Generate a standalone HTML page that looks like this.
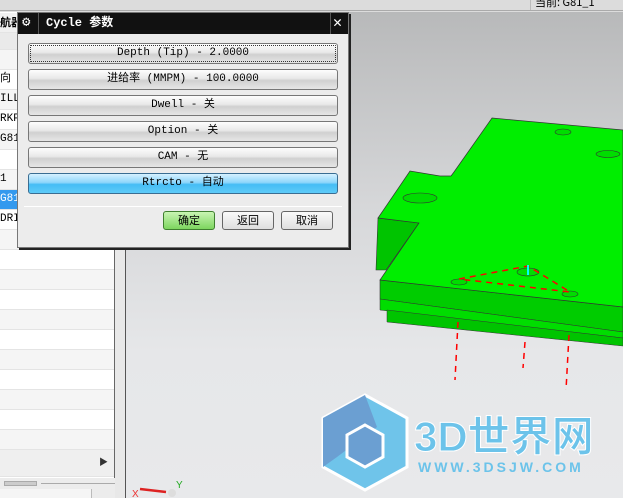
<!DOCTYPE html>
<html><head><meta charset="utf-8"><style>
*{margin:0;padding:0;box-sizing:border-box}
body{width:623px;height:498px;overflow:hidden;position:relative;background:#dcdcdc;font-family:"Liberation Mono","Noto Sans CJK SC",monospace;font-size:11px}
.abs{position:absolute}
#vp{left:126px;top:12px;width:497px;height:486px;background:linear-gradient(#b8b9ba,#d6d7d9 40%,#e6e7e9 70%,#e8e9eb)}
#left{left:0;top:12px;width:115px;height:466px;background:#fff;border-right:1px solid #666;overflow:hidden}
.row{position:absolute;left:0;width:114px;height:20px;border-bottom:1px solid #e4e4e4;font-size:11px;line-height:19px;color:#000;white-space:nowrap}
#dlg{left:17px;top:12px;width:332px;height:236px;background:#ececec;border:1px solid #777;box-shadow:2px 2px 0 #222}
#title{left:0;top:0;width:330px;height:21px;background:#111;color:#fff;font-weight:bold;font-size:12px;line-height:21px}
.btn{position:absolute;left:10px;width:310px;height:21px;border:1px solid #777;border-radius:3px;background:linear-gradient(#fdfdfd,#e8e8e8 45%,#d0d0d0 55%,#e6e6e6);text-align:center;line-height:19px;font-size:11px;color:#000}
.sb{position:absolute;top:198px;width:52px;height:19px;border:1px solid #666;border-radius:3px;background:linear-gradient(#fafafa,#dedede);text-align:center;line-height:17px;font-family:"Noto Sans CJK SC",sans-serif;font-size:11px}
</style></head><body>
<div class="abs" style="left:0;top:0;width:623px;height:11px;background:#dcdcdc;border-bottom:1px solid #aaa"></div>
<div class="abs" style="left:530px;top:-6px;font-size:11px;font-family:'Noto Sans CJK SC',sans-serif;border-left:1px solid #bbb;padding-left:4px">当前: G81_1</div>
<div id="vp" class="abs"></div>
<svg width="623" height="498" style="position:absolute;left:0;top:0">
<polygon points="380,280 623,307 623,332 380,299" fill="#00cc00" stroke="#333" stroke-width="0.6"/>
<polygon points="380,299 623,332 623,338 380,310" fill="#00dd00" stroke="#333" stroke-width="0.5"/>
<polygon points="387,310 623,338 623,346 387,322" fill="#00c400" stroke="#333" stroke-width="0.5"/>
<polygon points="378,218 419,223 386,270 376,270" fill="#00c400" stroke="#333" stroke-width="0.6"/>
<polygon points="492,118 623,130 623,307 380,280 419,223 378,218 410,171 440,176 451,176 454,172" fill="#00ee00" stroke="#333" stroke-width="0.7"/>
<ellipse cx="420" cy="198" rx="17" ry="5" fill="#00dd00" stroke="#333" stroke-width="0.6"/>
<ellipse cx="563" cy="132" rx="8" ry="3" fill="#00dd00" stroke="#333" stroke-width="0.6"/>
<ellipse cx="608" cy="154" rx="12" ry="3.5" fill="#00dd00" stroke="#333" stroke-width="0.6"/>
<ellipse cx="528" cy="272" rx="11" ry="4" fill="#00dd00" stroke="#333" stroke-width="0.6"/>
<ellipse cx="459" cy="282" rx="8" ry="3" fill="#00dd00" stroke="#333" stroke-width="0.6"/>
<ellipse cx="570" cy="294" rx="8" ry="3" fill="#00dd00" stroke="#333" stroke-width="0.6"/>
<g stroke="#f00" stroke-width="1.5" fill="none" stroke-dasharray="6,5">
<polyline points="459,279 528,266 570,292 459,279"/>
<line x1="458" y1="322" x2="455" y2="380"/>
<line x1="525" y1="342" x2="523" y2="368"/>
<line x1="569" y1="335" x2="566" y2="390"/>
</g>
<line x1="528" y1="265" x2="528" y2="275" stroke="#0ff" stroke-width="2"/>
<g transform="translate(323,395)">
<polygon points="0,23 42,0 84,23 84,72 42,95 0,72" fill="#6fc4ea" stroke="#fff" stroke-width="3"/>
<polygon points="0,23 42,0 54,32 14,62 0,72" fill="#6b9fd2"/>
<polygon points="42,30 60,40 60,62 42,72 24,62 24,40" fill="#6b9fd2" stroke="#fff" stroke-width="3"/>
</g>
<text x="414" y="451" font-family="Liberation Sans,Noto Sans CJK SC,sans-serif" font-size="42" font-weight="bold" fill="#6cc3ea" stroke="#fff" stroke-width="1">3D世界网</text>
<text x="418" y="472" font-family="Liberation Sans,sans-serif" font-size="14" font-weight="bold" fill="#6cc3ea" letter-spacing="3">WWW.3DSJW.COM</text>
<text x="132" y="497" font-family="Liberation Sans" font-size="10" fill="#e33">X</text>
<line x1="140" y1="489" x2="166" y2="492" stroke="#d22" stroke-width="2.5"/>
<text x="176" y="488" font-family="Liberation Sans" font-size="10" fill="#2a2">Y</text>
<circle cx="172" cy="493" r="4" fill="#ddd"/>
</svg>
<div class="abs" style="left:115px;top:12px;width:11px;height:486px;background:#e8e8e8;border-right:1px solid #555"></div>
<div id="left" class="abs">
<div class="row" style="top:1px;background:#f0f0f0;font-family:'Noto Sans CJK SC',sans-serif;font-weight:bold">航器</div>
<div class="row" style="top:21px;background:#eaeaea;height:17px"></div>
<div class="row" style="top:38px;background:#f5f5f5"></div>
<div class="row" style="top:58px">向</div>
<div class="row" style="top:78px;background:#f5f5f5">ILL</div>
<div class="row" style="top:98px">RKPI</div>
<div class="row" style="top:118px;background:#f5f5f5">G81</div>
<div class="row" style="top:138px"></div>
<div class="row" style="top:158px;background:#f5f5f5">1</div>
<div class="row" style="top:178px;background:#3399ee;color:#fff">G81</div>
<div class="row" style="top:198px">DRI</div>
<div class="row" style="top:218px;background:#f5f5f5"></div>
<div class="row" style="top:238px"></div>
<div class="row" style="top:258px;background:#f5f5f5"></div>
<div class="row" style="top:278px"></div>
<div class="row" style="top:298px;background:#f5f5f5"></div>
<div class="row" style="top:318px"></div>
<div class="row" style="top:338px;background:#f5f5f5"></div>
<div class="row" style="top:358px"></div>
<div class="row" style="top:378px;background:#f5f5f5"></div>
<div class="row" style="top:398px"></div>
<div class="row" style="top:418px;background:#f5f5f5"></div>
<div class="row" style="top:438px;background:#efefef;height:27px"><span style="position:absolute;right:6px;top:4px;font-size:9px;color:#333">▶</span></div>
</div>
<div class="abs" style="left:0;top:478px;width:115px;height:20px;background:#ececec"></div>
<div class="abs" style="left:4px;top:481px;width:33px;height:5px;background:#ccc;border:1px solid #aaa"></div>
<div class="abs" style="left:41px;top:483px;width:74px;height:1px;background:#aaa"></div>
<div class="abs" style="left:0;top:489px;width:92px;height:9px;background:#f5f5f5;border-right:1px solid #bbb"></div>
<div id="dlg" class="abs">
<div id="title" class="abs"><span style="position:absolute;left:4px;top:0;font-size:14px">⚙</span><span style="position:absolute;left:20px;top:0;width:1px;height:21px;background:#555"></span><span style="position:absolute;left:28px;font-family:'Liberation Mono','Noto Sans CJK SC',monospace">Cycle 参数</span><span style="position:absolute;left:312px;top:0;width:1px;height:21px;background:#555"></span><span style="position:absolute;left:315px;top:0;font-size:15px">✕</span></div>
<div class="btn" style="top:30px;outline:1px dotted #333;outline-offset:-3px">Depth (Tip) - 2.0000</div>
<div class="btn" style="top:56px">进给率 (MMPM) - 100.0000</div>
<div class="btn" style="top:82px">Dwell - 关</div>
<div class="btn" style="top:108px">Option - 关</div>
<div class="btn" style="top:134px">CAM - 无</div>
<div class="btn" style="top:160px;background:linear-gradient(#d6f1ff,#8ed6fb 45%,#45bdf5 55%,#5ecbf8);border-color:#3a6d92">Rtrcto - 自动</div>
<div class="abs" style="left:6px;top:193px;width:318px;height:1px;background:#ccc;border-bottom:1px solid #fff"></div>
<div class="sb" style="left:145px;background:linear-gradient(#c9f5b3,#7dd55f);border-color:#3f7f2f">确定</div>
<div class="sb" style="left:204px">返回</div>
<div class="sb" style="left:263px">取消</div>
</div>
</body></html>
